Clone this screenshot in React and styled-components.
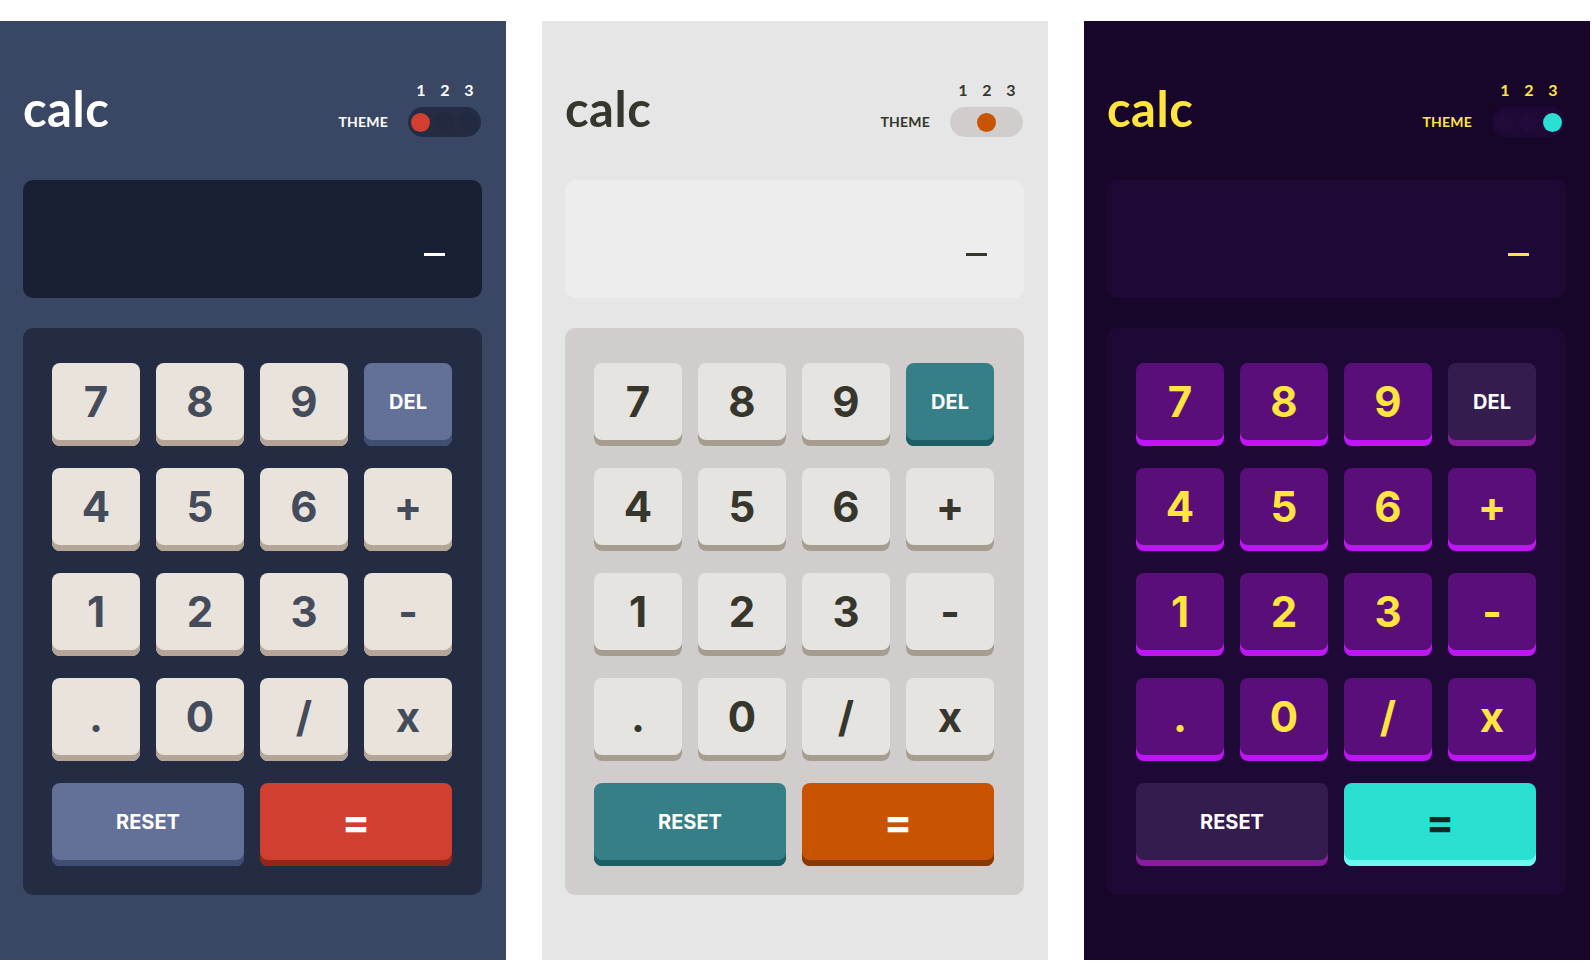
import React from 'react';
import styled, { createGlobalStyle, ThemeProvider } from 'styled-components';

const themes = [
  {
    bg: '#3a4764',
    pad: '#232c43',
    screen: '#182034',
    head: '#ffffff',
    dot: '#212a40',
    knob: '#d03f2f',
    key: '#eae3dc',
    keyShadow: '#b4a597',
    keyText: '#444b5a',
    fn: '#637097',
    fnShadow: '#404e72',
    fnText: '#ffffff',
    eq: '#d03f2f',
    eqShadow: '#93261a',
    eqText: '#ffffff',
  },
  {
    bg: '#e6e6e6',
    pad: '#d2cdcd',
    screen: '#ededed',
    head: '#36362c',
    dot: '#d2cdcd',
    knob: '#c85401',
    key: '#e5e4e0',
    keyShadow: '#a69d91',
    keyText: '#36362c',
    fn: '#377f86',
    fnShadow: '#1b5f65',
    fnText: '#ffffff',
    eq: '#c85401',
    eqShadow: '#873901',
    eqText: '#ffffff',
  },
  {
    bg: '#17062a',
    pad: '#1e0836',
    screen: '#1e0836',
    head: '#ffe53d',
    dot: '#220b3b',
    knob: '#2ae0d3',
    key: '#5a0e7a',
    keyShadow: '#be15f4',
    keyText: '#ffe53d',
    fn: '#341c4f',
    fnShadow: '#871c9c',
    fnText: '#ffffff',
    eq: '#2ae0d3',
    eqShadow: '#6cf9f1',
    eqText: '#1a2327',
  },
];

const keys = [
  { label: '7' }, { label: '8' }, { label: '9' }, { label: 'DEL', kind: 'fn' },
  { label: '4' }, { label: '5' }, { label: '6' }, { label: '+' },
  { label: '1' }, { label: '2' }, { label: '3' }, { label: '-' },
  { label: '.' }, { label: '0' }, { label: '/' }, { label: 'x' },
  { label: 'RESET', kind: 'fn', wide: true },
  { label: '=', kind: 'eq', wide: true },
];

const Calculator = ({ active }) => {
  return (
    <Panel>
      <Header>
        <Logo>calc</Logo>
        <Switch>
          <SwitchLabel>THEME</SwitchLabel>
          <SwitchControl>
            <Numbers>
              <span>1</span>
              <span>2</span>
              <span>3</span>
            </Numbers>
            <Track>
              {[0, 1, 2].map(i => (
                <Dot key={i} $active={i === active} />
              ))}
            </Track>
          </SwitchControl>
        </Switch>
      </Header>

      <Screen>
        <Cursor />
      </Screen>

      <Keypad>
        {keys.map(k => (
          <Key key={k.label} $kind={k.kind || 'num'} $wide={k.wide}>
            {k.label}
          </Key>
        ))}
      </Keypad>
    </Panel>
  );
};

export default function App() {
  return (
    <>
      <GlobalStyle />
      <Page>
        {themes.map((theme, i) => (
          <ThemeProvider theme={theme} key={i}>
            <Calculator active={i} />
          </ThemeProvider>
        ))}
      </Page>
    </>
  );
}

const GlobalStyle = createGlobalStyle`
  html, body {
    margin: 0;
    padding: 0;
    background: #ffffff;
    font-family: Inter, "Liberation Sans", sans-serif;
  }
  * {
    box-sizing: border-box;
  }
`;

const Page = styled.main`
  display: flex;
  gap: 36px;
  padding-top: 21px;
`;

const Panel = styled.section`
  flex-shrink: 0;
  width: 506px;
  height: 939px;
  padding: 0 24px 0 23px;
  background: ${p => p.theme.bg};
`;

const Header = styled.header`
  display: flex;
  justify-content: space-between;
  align-items: flex-end;
  padding-top: 61px;
`;

const Logo = styled.h1`
  margin: 0 0 4px 0;
  font-family: Lato, "Open Sans", sans-serif;
  font-weight: 700;
  font-size: 49px;
  line-height: 1;
  letter-spacing: 0.5px;
  color: ${p => p.theme.head};
`;

const Switch = styled.div`
  display: flex;
  align-items: flex-end;
  gap: 20px;
  color: ${p => p.theme.head};
  font-family: Lato, "Open Sans", sans-serif;
  font-weight: 700;
`;

const SwitchLabel = styled.span`
  font-size: 14px;
  line-height: 1;
  letter-spacing: 0.2px;
  margin-bottom: 8px;
`;

const SwitchControl = styled.div`
  display: flex;
  flex-direction: column;
  gap: 9px;
`;

const Numbers = styled.div`
  display: grid;
  grid-template-columns: repeat(3, 24px);
  padding: 0 1px;
  font-size: 16px;
  line-height: 16px;
  text-align: center;
`;

const Track = styled.div`
  display: grid;
  grid-template-columns: repeat(3, 24px);
  align-items: center;
  justify-items: center;
  width: 73px;
  height: 30px;
  padding: 0 0.5px;
  border-radius: 15px;
  background: ${p => p.theme.pad};
`;

const Dot = styled.span`
  width: 19px;
  height: 19px;
  border-radius: 50%;
  background: ${p => (p.$active ? p.theme.knob : p.theme.dot)};
`;

const Screen = styled.div`
  display: flex;
  justify-content: flex-end;
  align-items: flex-start;
  height: 118px;
  margin-top: 43px;
  padding: 73px 37px 0 0;
  border-radius: 10px;
  background: ${p => p.theme.screen};
`;

const Cursor = styled.span`
  width: 21px;
  height: 3px;
  background: ${p => p.theme.head};
`;

const Keypad = styled.div`
  display: grid;
  grid-template-columns: repeat(4, 88px);
  column-gap: 16px;
  row-gap: 22px;
  margin-top: 30px;
  padding: 35px 29px 29px;
  border-radius: 10px;
  background: ${p => p.theme.pad};
`;

const keyColors = {
  num: t => [t.key, t.keyShadow, t.keyText],
  fn: t => [t.fn, t.fnShadow, t.fnText],
  eq: t => [t.eq, t.eqShadow, t.eqText],
};

const Key = styled.button`
  grid-column: ${p => (p.$wide ? 'span 2' : 'span 1')};
  display: flex;
  align-items: center;
  justify-content: center;
  height: 83px;
  padding: 0 0 6px 0;
  border: none;
  border-radius: 8px;
  font-family: Inter, "Liberation Sans", sans-serif;
  font-weight: 700;
  font-size: ${p => (p.$kind === 'fn' ? '20px' : '42px')};
  line-height: 1;
  background: ${p => keyColors[p.$kind](p.theme)[0]};
  box-shadow: inset 0 -6px 0 ${p => keyColors[p.$kind](p.theme)[1]};
  color: ${p => keyColors[p.$kind](p.theme)[2]};
`;
